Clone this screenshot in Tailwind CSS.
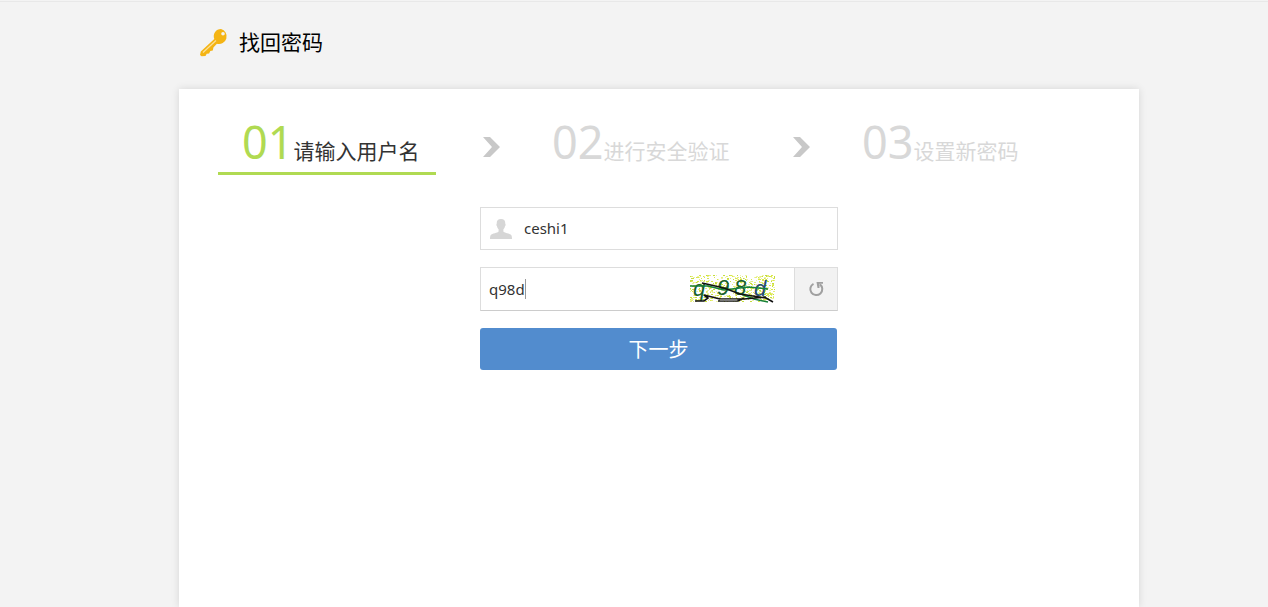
<!doctype html>
<html lang="zh-CN">
  <head>
    <meta charset="UTF-8" />
    <meta name="viewport" content="width=device-width, initial-scale=1.0" />
    <title>找回密码</title>
    <script src="https://cdn.jsdelivr.net/npm/@tailwindcss/browser@4"></script>
  </head>
  <body
    class="flex min-h-screen flex-col overflow-x-hidden bg-[#f3f3f3] font-['Noto_Sans','Noto_Sans_CJK_SC',sans-serif] text-[#333]"
  >
    <div class="h-0.5 border-b border-[#e8e8e8]"></div>
    <div class="flex grow flex-col pl-[50px]">
      <div class="mx-auto flex w-full max-w-[960px] grow flex-col">
        <header class="flex h-[87px] items-center gap-2 px-5 pb-1.5">
          <svg class="h-8 w-8" viewBox="0 0 32 32" aria-hidden="true">
            <path
              fill="#f4b414"
              fill-rule="evenodd"
              d="M22 2a7.200 7.200 0 0 0-6.700 10L1.800 24.500 1 28l1.500 1.300 4-.3 1.200-2.200 2.400-.3 1.200-2.400 2.500-.6.6-3 3.500-3.700A7.200 7.200 0 1 0 22 2Zm2 3a1.800 1.800 0 1 1 0 3.600 1.800 1.800 0 0 1 0-3.600Z"
            />
            <path d="M4 25.500 17 13.500" stroke="#fbe09a" stroke-width="1.200" />
          </svg>
          <h1 class="text-[21px] text-black">找回密码</h1>
        </header>

        <main class="grow bg-white px-[39px] pt-8 shadow-[0_0_8px_rgba(0,0,0,0.12)]">
          <ol class="flex">
            <li class="flex w-[310px] shrink-0">
              <div
                class="flex h-[54px] w-[218px] items-baseline border-b-3 border-[#b0da52] pl-6 whitespace-nowrap"
              >
                <span class="text-[45px] leading-[42px] text-[#b0da52]">01</span>
                <span class="text-[21px] leading-6">请输入用户名</span>
              </div>
              <svg class="mt-4 ml-[47px] h-5 w-[17px]" viewBox="0 0 17 20" aria-hidden="true">
                <path fill="#c8c8c8" d="M0 0h7l10 10L7 20H0l9-10Z" />
              </svg>
            </li>
            <li class="flex w-[310px] shrink-0 text-[#d8d8d8]">
              <div class="flex h-[54px] w-[218px] items-baseline pl-6 whitespace-nowrap">
                <span class="text-[45px] leading-[42px]">02</span>
                <span class="text-[21px] leading-6">进行安全验证</span>
              </div>
              <svg class="mt-4 ml-[47px] h-5 w-[17px]" viewBox="0 0 17 20" aria-hidden="true">
                <path fill="#c8c8c8" d="M0 0h7l10 10L7 20H0l9-10Z" />
              </svg>
            </li>
            <li class="flex text-[#d8d8d8]">
              <div class="flex h-[54px] w-[218px] items-baseline pl-6 whitespace-nowrap">
                <span class="text-[45px] leading-[42px]">03</span>
                <span class="text-[21px] leading-6">设置新密码</span>
              </div>
            </li>
          </ol>

          <form class="mx-auto mt-8 flex w-[358px] flex-col gap-[17px]">
            <div class="flex h-[43px] items-center border border-[#ddd] pl-[9px]">
              <label for="username" aria-label="用户名">
                <svg class="h-5 w-[22px]" viewBox="0 0 22 20" aria-hidden="true">
                  <path
                    fill="#d6d6d6"
                    d="M11 0c3 0 4.500 1.500 4.300 5 .5.200.5 1.800-.3 2.200-.3 1.600-.8 2.300-1.600 3v2.300c.8 1.500 6.500 1.800 7.800 3.500.6.800.8 2.500.8 4H0c0-1.500.2-3.200.8-4 1.300-1.700 7-2 7.800-3.500v-2.300c-.8-.7-1.300-1.400-1.600-3-.8-.4-.8-2-.3-2.200C6.500 1.500 8 0 11 0Z"
                  />
                </svg>
              </label>
              <input
                id="username"
                type="text"
                value="ceshi1"
                class="h-full min-w-0 grow px-3 pb-0.5 text-[15px] outline-none"
              />
            </div>

            <div class="flex h-11 border border-[#ddd] border-b-[#ccc]">
              <div class="relative flex min-w-0 grow">
                <input
                  type="text"
                  value="q98d"
                  aria-label="验证码"
                  class="w-full px-2 text-[15px] outline-none"
                />
                <span class="absolute top-[11px] left-[44px] h-5 w-px bg-[#999]"></span>
              </div>
              <svg
                class="mt-[7px] mr-[18px] h-7 w-[86px] shrink-0"
                viewBox="0 0 86 28"
                fill="none"
                role="img"
                aria-label="验证码图片"
              >
                <g id="noise"></g>
                <g
                  class="font-['Liberation_Sans',sans-serif] italic"
                  font-size="22"
                  fill="#17602f"
                >
                  <text x="3" y="21">q</text>
                  <text x="27" y="20">9</text>
                  <text x="44" y="20">8</text>
                  <text x="64" y="21" fill="#234a78">d</text>
                </g>
                <path stroke="#17803a" stroke-width="1.500" d="M0 11h18l16 4 24-3 20 2M48 18l16 6 14 3" />
                <path
                  stroke="#111"
                  stroke-width="1.600"
                  d="M12 8l22 5 16 6 26 4 7 4M5 26h9l4-3-4-3 16 4h24l22-2M28 26h20l6-3"
                />
                <path stroke="#888" stroke-width="1.500" d="M30 25h17" />
              </svg>
              <button
                type="button"
                aria-label="刷新验证码"
                class="flex w-[43px] shrink-0 items-center justify-center border-l border-[#ddd] bg-[#f2f2f2]"
              >
                <svg class="h-4 w-4" viewBox="0 0 16 16" fill="none" aria-hidden="true">
                  <path stroke="#a0a0a0" stroke-width="2" d="M5.500 2.800a6 6 0 1 0 6.500.6" />
                  <path fill="#a0a0a0" d="M8.500 1H15v1.800h-3.500V7H9.500Z" />
                </svg>
              </button>
            </div>

            <button
              type="submit"
              class="mr-px h-[42px] rounded-[3px] bg-[#528cce] pt-0.5 text-[20px] text-white"
            >
              下一步
            </button>
          </form>
        </main>
      </div>
    </div>
    <script>
      // speckled background of the captcha
      const noise = document.getElementById("noise");
      const colors = ["#d9e84a", "#e6ee7c", "#c5dc3c", "#eef3a8"];
      let seed = 7;
      const rand = () => (seed = (seed * 16807) % 2147483647) / 2147483647;
      for (let i = 0; i < 620; i++) {
        const dot = document.createElementNS("http://www.w3.org/2000/svg", "rect");
        dot.setAttribute("x", Math.floor(rand() * 85));
        dot.setAttribute("y", Math.floor(rand() * 27));
        dot.setAttribute("width", rand() > 0.5 ? 2 : 1);
        dot.setAttribute("height", 1);
        dot.setAttribute("fill", colors[i % 4]);
        noise.appendChild(dot);
      }
    </script>
  </body>
</html>
